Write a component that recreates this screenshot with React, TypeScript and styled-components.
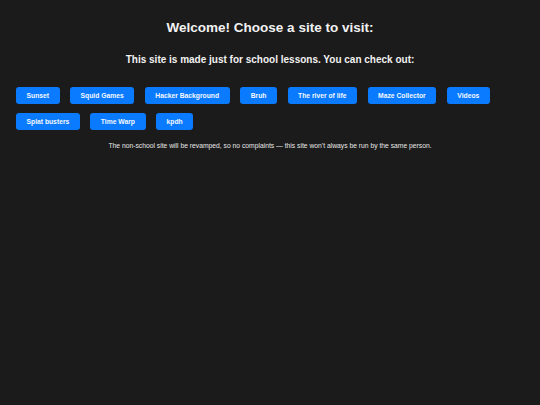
import React from "react";
import styled, { createGlobalStyle } from "styled-components";

const Global = createGlobalStyle`
  html, body {
    margin: 0;
    padding: 0;
    background: #1b1b1b;
  }
  body {
    font-family: "Liberation Sans", Arial, sans-serif;
    color: #f2f2f2;
  }
`;

const Page = styled.main`
  min-height: 405px;
  box-sizing: border-box;
  padding: 20px 16px 16px;
  display: flex;
  flex-direction: column;
  align-items: stretch;
`;

const Title = styled.h1`
  margin: 0;
  text-align: center;
  font-size: 13.5px;
  line-height: 16px;
  font-weight: 700;
  color: #f2f2f2;
`;

const Subtitle = styled.h2`
  margin: 18px 0 0;
  text-align: center;
  font-size: 10px;
  line-height: 12px;
  font-weight: 700;
  color: #f2f2f2;
`;

const ButtonGrid = styled.nav`
  margin-top: 21px;
  display: flex;
  flex-wrap: wrap;
  column-gap: 10.6px;
  row-gap: 9px;
`;

const SiteButton = styled.a`
  display: inline-flex;
  align-items: center;
  justify-content: center;
  height: 17px;
  padding: 0 10.5px;
  background: #0a7bff;
  color: #f4f8ff;
  border-radius: 3px;
  font-size: 6.75px;
  font-weight: 700;
  text-decoration: none;
  white-space: nowrap;
`;

const Note = styled.p`
  margin: 11.5px 0 0;
  text-align: center;
  font-size: 6.75px;
  line-height: 8px;
  color: #e8e8e8;
`;

const sites = [
  "Sunset",
  "Squid Games",
  "Hacker Background",
  "Bruh",
  "The river of life",
  "Maze Collector",
  "Videos",
  "Splat busters",
  "Time Warp",
  "kpdh",
];

export default function App() {
  return (
    <>
      <Global />
      <Page>
        <Title>Welcome! Choose a site to visit:</Title>
        <Subtitle>This site is made just for school lessons. You can check out:</Subtitle>
        <ButtonGrid>
          {sites.map((s) => (
            <SiteButton key={s} href="#">
              {s}
            </SiteButton>
          ))}
        </ButtonGrid>
        <Note>
          The non-school site will be revamped, so no complaints — this site won't always be run by the same person.
        </Note>
      </Page>
    </>
  );
}
